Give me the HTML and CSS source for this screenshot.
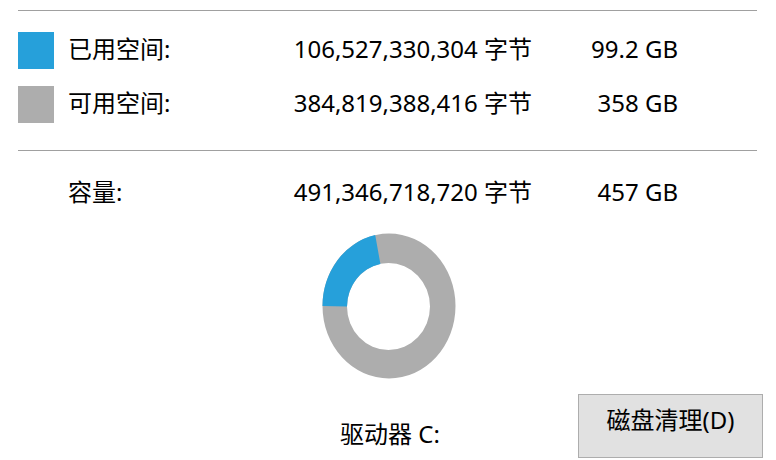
FILE: index.html
```html
<!DOCTYPE html>
<html lang="zh-CN">
<head>
<meta charset="utf-8">
<title>磁盘属性</title>
<link rel="stylesheet" href="styles.css">
</head>
<body>
<div class="panel">
  <div class="rule rule-top"></div>
  <div class="row row-used">
    <span class="swatch swatch-used"></span>
    <span class="label">已用空间:</span>
    <span class="bytes">106,527,330,304 字节</span>
    <span class="size">99.2 GB</span>
  </div>
  <div class="row row-free">
    <span class="swatch swatch-free"></span>
    <span class="label">可用空间:</span>
    <span class="bytes">384,819,388,416 字节</span>
    <span class="size">358 GB</span>
  </div>
  <div class="rule rule-mid"></div>
  <div class="row row-cap">
    <span class="swatch-empty"></span>
    <span class="label">容量:</span>
    <span class="bytes">491,346,718,720 字节</span>
    <span class="size">457 GB</span>
  </div>
  <div class="chart">
    <svg class="donut" width="134" height="146" viewBox="0 0 134 146">
      <path fill="#adadad" fill-rule="evenodd" d="M0.5 73 A66.5 72.5 0 1 1 133.5 73 A66.5 72.5 0 1 1 0.5 73 Z M25 73.5 A41.5 43.5 0 1 0 108 73.5 A41.5 43.5 0 1 0 25 73.5 Z"/>
      <path fill="#26a0da" d="M0.5 73 A66.5 72.5 0 0 1 53.2 2.1 L58.4 31 A41.5 43.5 0 0 0 25 73.5 Z"/>
    </svg>
  </div>
  <div class="bottom">
    <span class="drive">驱动器 C:</span>
    <button class="cleanup" type="button">磁盘清理(D)</button>
  </div>
</div>
</body>
</html>
```
FILE: styles.css
```css
html, body {
  margin: 0;
  padding: 0;
  background: #ffffff;
}
body {
  width: 776px;
  height: 460px;
  overflow: hidden;
  font-family: "Noto Sans", "Noto Sans CJK SC", sans-serif;
  font-size: 24px;
  color: #000000;
}
.panel {
  padding-left: 18px;
  width: 758px;
}
.rule {
  width: 739px;
  height: 1px;
  background: #a0a0a0;
}
.rule-top {
  margin-top: 10px;
}
.rule-mid {
  margin-top: 27px;
}
.row {
  display: grid;
  grid-template-columns: 36px 14px 212px 252px 146px;
  height: 37px;
  line-height: 37px;
  align-items: center;
}
.row-used {
  margin-top: 21px;
}
.row-free {
  margin-top: 17px;
}
.row-cap {
  margin-top: 24px;
}
.swatch {
  grid-column: 1;
  width: 36px;
  height: 37px;
}
.swatch-empty {
  grid-column: 1;
}
.swatch-used {
  background: #26a0da;
}
.swatch-free {
  background: #adadad;
}
.label {
  grid-column: 3;
  white-space: nowrap;
  position: relative;
  top: -2px;
}
.bytes {
  grid-column: 4;
  text-align: right;
  white-space: nowrap;
  position: relative;
  top: -2px;
}
.size {
  grid-column: 5;
  text-align: right;
  white-space: nowrap;
  position: relative;
  top: -2px;
}
.chart {
  margin-top: 21px;
  padding-left: 304px;
  height: 146px;
}
.donut {
  display: block;
}
.bottom {
  margin-top: 15px;
  display: grid;
  grid-template-columns: 560px 185px;
  height: 64px;
}
.drive {
  padding-left: 322px;
  align-self: end;
  line-height: 32px;
  padding-bottom: 8px;
  white-space: nowrap;
}
.cleanup {
  width: 185px;
  height: 64px;
  margin: 0;
  padding: 0 0 16px 0;
  background: #e1e1e1;
  border: 1px solid #adadad;
  font-family: "Noto Sans", "Noto Sans CJK SC", sans-serif;
  font-size: 24px;
  color: #000000;
}
```
